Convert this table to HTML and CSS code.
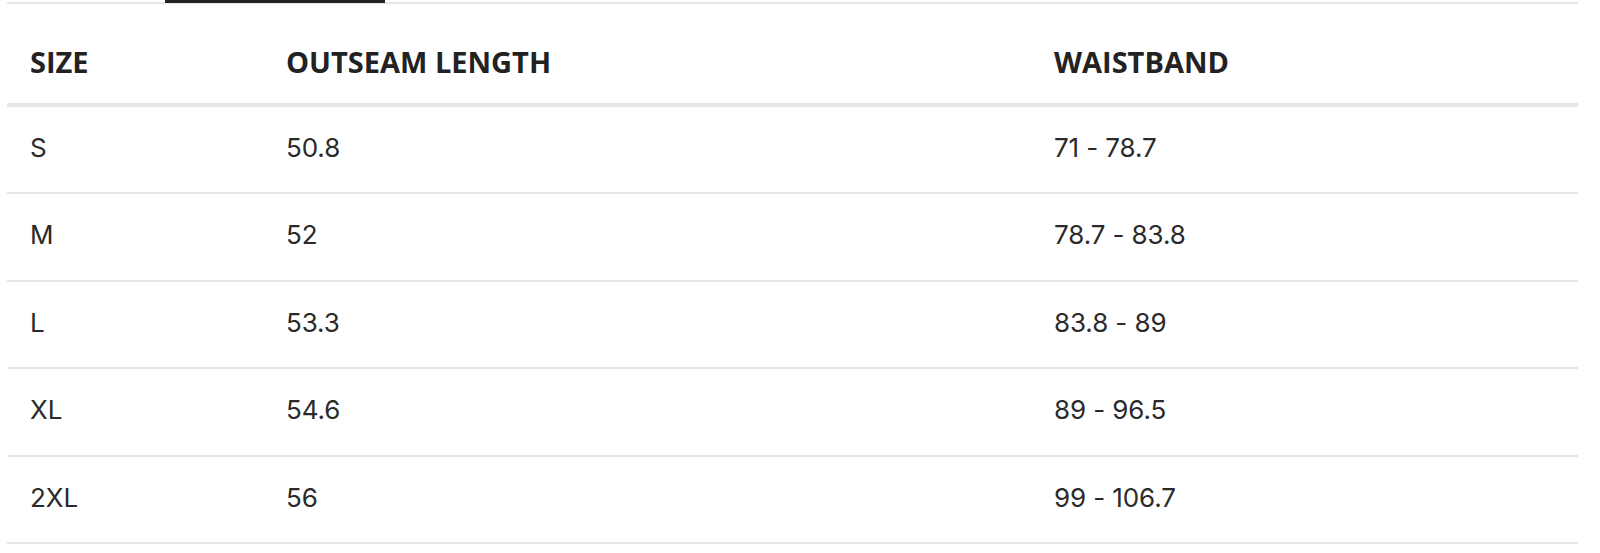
FILE: index.html
```html
<!DOCTYPE html>
<html>
<head>
<meta charset="utf-8">
<link rel="stylesheet" href="styles.css">
</head>
<body>
<div class="wrap">
  <div class="tabs"><span class="tab-active"></span></div>
  <table class="sizes">
    <thead>
      <tr><th class="c1">SIZE</th><th class="c2">OUTSEAM LENGTH</th><th class="c3">WAISTBAND</th></tr>
    </thead>
    <tbody>
      <tr><td>S</td><td>50.8</td><td>71 - 78.7</td></tr>
      <tr><td>M</td><td>52</td><td>78.7 - 83.8</td></tr>
      <tr><td>L</td><td>53.3</td><td>83.8 - 89</td></tr>
      <tr><td>XL</td><td>54.6</td><td>89 - 96.5</td></tr>
      <tr><td>2XL</td><td>56</td><td>99 - 106.7</td></tr>
    </tbody>
  </table>
</div>
</body>
</html>
```

FILE: styles.css
```css
html, body { margin: 0; padding: 0; background: #fff; }
body { font-family: "Open Sans", sans-serif; color: #222; }
.wrap { margin: 0 22px 0 7px; }
.tabs { position: relative; height: 4px; border-bottom: 2px solid #e6e6e6; box-sizing: border-box; }
.tab-active { position: absolute; left: 158px; top: 0; width: 220px; height: 3px; background: #222; }
.sizes { width: 100%; border-collapse: separate; border-spacing: 0; table-layout: fixed; }
.sizes th { font-weight: 700; font-size: 29px; line-height: 40px; text-align: left; padding: 38px 0 21px 23px; border-bottom: 4px solid #e6e6e6; }
.sizes th.c1 { width: 233px; }
.sizes th.c2 { width: 745px; }
.sizes td { font-family: Inter, "Open Sans", sans-serif; font-size: 26px; line-height: 30px; padding: 26px 0 29.4px 23px; border-bottom: 2px solid #e6e6e6; color: #2a2a2a; letter-spacing: -0.1px; }
```
